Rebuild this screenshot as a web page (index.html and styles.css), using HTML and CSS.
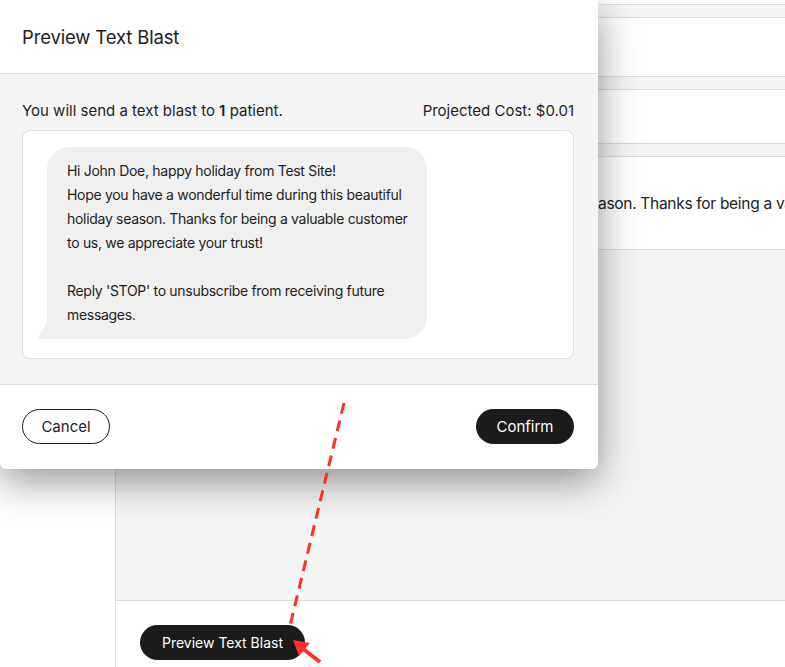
FILE: index.html
```html
<!DOCTYPE html>
<html>
<head>
<meta charset="utf-8">
<link rel="stylesheet" href="styles.css">
</head>
<body>
<div class="page">
  <aside class="sidebar"></aside>
  <main class="main">
    <div class="cards">
      <div class="card card-a"></div>
      <div class="card card-b"></div>
      <div class="card card-c"></div>
      <div class="card card-d"><p class="card-text">ason. Thanks for being a valuable customer to us, we appreciate your trust!</p></div>
    </div>
    <div class="spacer"></div>
    <footer class="page-footer">
      <button class="btn btn-dark btn-preview">Preview Text Blast</button>
    </footer>
  </main>
</div>

<div class="modal">
  <header class="modal-header">
    <h2 class="modal-title">Preview Text Blast</h2>
  </header>
  <section class="modal-body">
    <div class="summary">
      <span>You will send a text blast to <b>1</b> patient.</span>
      <span>Projected Cost: $0.01</span>
    </div>
    <div class="preview-box">
      <div class="bubble">
        <p>Hi John Doe, happy holiday from Test Site!<br>Hope you have a wonderful time during this beautiful holiday season. Thanks for being a valuable customer to us, we appreciate your trust!<br><br>Reply 'STOP' to unsubscribe from receiving future messages.</p>
      </div>
    </div>
  </section>
  <footer class="modal-footer">
    <button class="btn btn-outline">Cancel</button>
    <button class="btn btn-dark btn-confirm">Confirm</button>
  </footer>
</div>

<svg class="annotation" width="785" height="667" viewBox="0 0 785 667">
  <line x1="344" y1="403" x2="289" y2="630" stroke="#ff3126" stroke-width="3" stroke-dasharray="11 7"/>
  <line x1="320" y1="662" x2="302" y2="648" stroke="#ff3126" stroke-width="4"/>
  <polygon points="293,640 310,643 299,656" fill="#ff3126"/>
</svg>
</body>
</html>
```
FILE: styles.css
```css
* { box-sizing: border-box; }
html, body { margin: 0; padding: 0; }
body {
  width: 785px;
  height: 667px;
  overflow: hidden;
  font-family: "Inter", "Liberation Sans", sans-serif;
  color: #1d1d1d;
  background: #fff;
}

.page {
  display: grid;
  grid-template-columns: 116px 1fr;
  height: 667px;
}
.sidebar {
  background: #fff;
  border-right: 1px solid #dedede;
}
.main {
  display: flex;
  flex-direction: column;
  background: #f5f5f5;
  overflow: hidden;
}
.cards {
  display: flex;
  flex-direction: column;
  gap: 12px;
  margin-top: -40px;
}
.card {
  background: #fff;
  border: 1px solid #dcdcdc;
  border-left: none;
  border-right: none;
}
.card-a { height: 45px; }
.card-b { height: 60px; }
.card-c { height: 55px; }
.card-d {
  height: 94px;
  display: flex;
  align-items: center;
  overflow: hidden;
}
.card-text {
  margin: 0;
  white-space: nowrap;
  font-size: 15.5px;
  letter-spacing: -0.3px;
  padding-left: 482px;
  color: #222;
}
.spacer { flex: 1; }
.page-footer {
  height: 67px;
  background: #fff;
  border-top: 1px solid #dcdcdc;
  padding: 24px 24px 0;
}

.btn {
  font-family: "Inter", "Liberation Sans", sans-serif;
  height: 35px;
  border-radius: 18px;
  font-size: 14px;
  padding: 0 20px;
  cursor: pointer;
}
.btn-dark {
  background: #1b1b1b;
  color: #fff;
  border: none;
}
.btn-outline {
  background: #fff;
  color: #1d1d1d;
  border: 1px solid #1d1d1d;
}
.btn-preview { width: 165px; padding: 0; }

.modal {
  position: absolute;
  left: 0;
  top: 0;
  width: 598px;
  background: #fff;
  border-radius: 0 0 6px 6px;
  box-shadow: 0 12px 40px rgba(0, 0, 0, 0.42);
  overflow: hidden;
}
.modal-header {
  height: 74px;
  border-bottom: 1px solid #dedede;
  padding: 0 22px;
  display: flex;
  align-items: center;
}
.modal-title {
  margin: 0;
  font-size: 18.5px;
  letter-spacing: -0.15px;
  font-weight: 400;
  color: #1d1d1d;
}
.modal-body {
  background: #f5f5f5;
  padding: 26px 24px 25px 22px;
  border-bottom: 1px solid #dedede;
}
.summary {
  display: flex;
  justify-content: space-between;
  font-size: 15px;
  line-height: 22px;
  margin-bottom: 8px;
}
.summary b { font-weight: 600; }
.preview-box {
  background: #fff;
  border: 1px solid #e0e0e0;
  border-radius: 8px;
  padding: 16px 24px 19px;
  height: 229px;
}
.bubble {
  position: relative;
  width: 380px;
  background: #f0f0f0;
  border-radius: 22px 22px 22px 0;
  padding: 12px 18px 12px 20px;
}
.bubble::before {
  content: "";
  position: absolute;
  left: -10px;
  bottom: 0;
  border-bottom: 16px solid #f0f0f0;
  border-left: 10px solid transparent;
}
.bubble p {
  margin: 0;
  font-size: 14px;
  letter-spacing: -0.3px;
  line-height: 24px;
  color: #1d1d1d;
}
.modal-footer {
  height: 84px;
  padding: 24px 24px 0 22px;
  display: flex;
  justify-content: space-between;
  align-items: flex-start;
}
.modal-footer .btn { font-size: 15px; }
.btn-outline { width: 88px; padding: 0; }
.btn-confirm { width: 98px; padding: 0; }

.annotation {
  position: absolute;
  left: 0;
  top: 0;
  pointer-events: none;
}
```
